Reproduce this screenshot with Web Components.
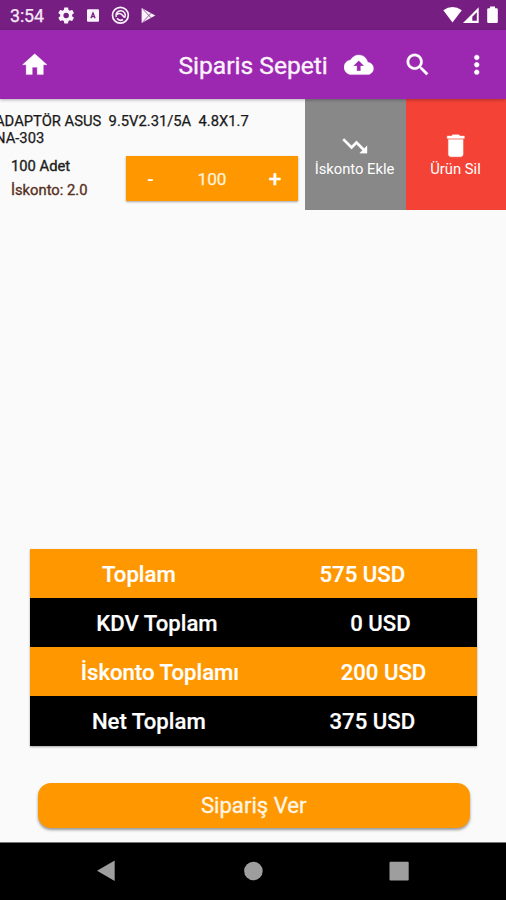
<!DOCTYPE html>
<html lang="tr">
<head>
<meta charset="utf-8">
<title>Siparis Sepeti</title>
<style>
html,body{margin:0;padding:0}
body{width:506px;height:900px;overflow:hidden;background:#fafafa;font-family:Roboto,"Liberation Sans",sans-serif}
</style>
</head>
<body>
<order-screen></order-screen>
<script>
const define = (name, html) => customElements.define(name, class extends HTMLElement {
  constructor() {
    super();
    this.attachShadow({mode: 'open'}).innerHTML = html;
  }
});

const ICONS = {
  home: 'M10 20v-6h4v6h5v-8h3L12 3 2 12h3v8z',
  cloud: 'M19.35 10.04C18.67 6.59 15.64 4 12 4 9.11 4 6.6 5.64 5.35 8.04 2.34 8.36 0 10.91 0 14c0 3.31 2.69 6 6 6h13c2.76 0 5-2.24 5-5 0-2.64-2.05-4.78-4.65-4.96zM13.600 13v4h-3.200v-4H7.500l4.500-4.500 4.500 4.500z',
  search: 'M15.5 14h-.79l-.28-.27C15.41 12.59 16 11.11 16 9.5 16 5.91 13.09 3 9.5 3S3 5.91 3 9.5 5.91 16 9.5 16c1.61 0 3.09-.59 4.23-1.57l.27.28v.79l5 4.99L20.49 19l-4.99-5zm-6 0C7.01 14 5 11.99 5 9.5S7.01 5 9.5 5 14 7.01 14 9.5 11.99 14 9.5 14z',
  more: 'M12 8c1.1 0 2-.9 2-2s-.9-2-2-2-2 .9-2 2 .9 2 2 2zm0 2c-1.1 0-2 .9-2 2s.9 2 2 2 2-.9 2-2-.9-2-2-2zm0 6c-1.1 0-2 .9-2 2s.9 2 2 2 2-.9 2-2-.9-2-2-2z',
  trend: 'M16 18l2.29-2.29-4.88-4.88-4 4L2 7.41 3.41 6l6 6 4-4 6.3 6.29L22 12v6z',
  trash: 'M6 19c0 1.1.9 2 2 2h8c1.1 0 2-.9 2-2V7H6v12zM19 4h-3.5l-1-1h-5l-1 1H5v2h14V4z'
};
customElements.define('md-icon', class extends HTMLElement {
  connectedCallback() {
    if (this.shadowRoot) return;
    this.attachShadow({mode: 'open'}).innerHTML = `<style>:host{display:block;width:29.5px;height:29.5px;flex:none}svg{display:block;width:100%;height:100%;fill:currentColor;stroke:currentColor;stroke-width:.25}</style>
      <svg viewBox="0 0 24 24"><path d="${ICONS[this.getAttribute('name')]}"/></svg>`;
  }
});

define('status-bar', `<style>
:host{display:flex;justify-content:space-between;height:30px;background:#771e82;color:#fff}
span{font-size:17.8px;line-height:32px;padding-left:10px;width:46px;box-sizing:border-box;letter-spacing:-.1px;white-space:nowrap;color:#f6e9f7;-webkit-text-stroke:.25px}
.left{display:flex}svg{display:block}
</style>
<div class="left"><span>3:54</span>
<svg width="114" height="30" viewBox="46 0 114 30" fill="#fbf3fb">
 <g transform="translate(56.2 5.500) scale(.83)"><path d="M19.14 12.94c.04-.3.06-.61.06-.94s-.02-.64-.07-.94l2.03-1.58c.18-.14.23-.41.12-.61l-1.92-3.32c-.12-.22-.37-.29-.59-.22l-2.39.96c-.5-.38-1.03-.7-1.62-.94l-.36-2.54c-.04-.24-.24-.41-.48-.41h-3.84c-.24 0-.43.17-.47.41l-.36 2.54c-.59.24-1.13.57-1.62.94l-2.39-.96c-.22-.08-.47 0-.59.22L2.74 8.87c-.12.21-.08.47.12.61l2.03 1.58c-.05.3-.09.63-.09.94s.02.64.07.94l-2.03 1.58c-.18.14-.23.41-.12.61l1.92 3.32c.12.22.37.29.59.22l2.39-.96c.5.38 1.03.7 1.62.94l.36 2.54c.05.24.24.41.48.41h3.84c.24 0 .44-.17.47-.41l.36-2.54c.59-.24 1.13-.56 1.62-.94l2.39.96c.22.08.47 0 .59-.22l1.92-3.32c.12-.22.07-.47-.12-.61l-2.01-1.58zM12 15.300A3.300 3.300 0 1 1 12 8.700a3.300 3.300 0 0 1 0 6.600z"/></g>
 <rect x="87" y="9.200" width="12" height="12.600" rx="1"/>
 <path d="M90.900 18.300l2.100-5.300 2.100 5.300M91.500 16.700h3" fill="none" stroke="#771e82" stroke-width="1.300"/>
 <circle cx="120.400" cy="15.300" r="7.900" fill="none" stroke="#fbf3fb" stroke-width="1.700"/>
 <path d="M116.200 17a4.700 4.700 0 1 1 8.600 .6M117 14.600c1.500-1.600 3.500-1.400 5 .2l2.600 2.800M117 18.300a4.600 4.600 0 0 0 6 1.200" fill="none" stroke="#fbf3fb" stroke-width="1.600"/>
 <path d="M141.600 8L155.300 15.600 141.600 23z"/>
 <path d="M143 9.300l8 8.500M143 21.700l8-8.500" stroke="#771e82" stroke-width=".7"/>
</svg></div>
<svg width="70" height="30" viewBox="436 0 70 30" fill="#fff">
 <path d="M443.300 10.300Q452.500 3.600 461.800 10.300L452.500 22.500z"/>
 <path d="M463 23L478.700 7.300V23z"/><path d="M472.300 16.700L476.800 12.200V20.800H472.300z" fill="#771e82"/>
 <path d="M490 6.500h5v1.800h1.600q1.200 0 1.200 1.200v12.300q0 1.200-1.200 1.200h-8.200q-1.200 0-1.200-1.200V9.500q0-1.200 1.200-1.200H490z"/>
</svg>`);

define('app-bar', `<style>
:host{display:flex;align-items:center;height:68.500px;box-sizing:border-box;background:#9c27b0;color:#fff;padding:0 14.800px 0 20px;box-shadow:0 1px 3px rgba(0,0,0,.3);position:relative}
h1{flex:1;margin:0;text-align:right;font-size:24.600px;font-weight:400;line-height:30px;letter-spacing:0;padding:3px 16.500px 0 0;color:#fbf3fb;-webkit-text-stroke:.35px;white-space:nowrap}
.a{display:flex;gap:29.200px}
</style><md-icon name="home"></md-icon><h1><slot></slot></h1>
<div class="a"><md-icon name="cloud"></md-icon><md-icon name="search"></md-icon><md-icon name="more"></md-icon></div>`);

define('slide-action', `<style>
:host{display:flex;flex-direction:column;align-items:center;width:101px;flex:none;box-sizing:border-box;padding-top:32px;color:#fff}
span{font-size:14.800px;line-height:18px;white-space:nowrap;letter-spacing:-.02px;margin-left:-1px}
</style><slot name="icon"></slot><span><slot></slot></span>`);

define('qty-stepper', `<style>
:host{display:grid;grid-template-columns:49px 74px 49px;align-items:center;justify-items:center;width:172px;height:44.500px;background:#ff9800;color:#fff3df;box-shadow:0 1px 2px rgba(0,0,0,.35);font-size:17.200px;line-height:24px}
span{padding-top:0;-webkit-text-stroke:.25px}
b{font-size:19px;font-weight:500;color:#fff;padding-top:2px}b:last-child{font-size:22px;font-weight:400;-webkit-text-stroke:.6px;padding-left:3px}
</style><b>-</b><span><slot></slot></span><b>+</b>`);

define('cart-item', `<style>
:host{display:flex;height:111px;overflow:hidden}
.body{width:304.500px;flex:none;box-sizing:border-box;padding:14.500px 6.500px 0 0}
p{margin:0 0 0 -5px;font-size:14.750px;line-height:17.300px;white-space:pre;color:#191919;-webkit-text-stroke:.25px}
.row{display:flex;justify-content:space-between;padding:8.700px 0 0 11px}
.info{font-size:14.760px;line-height:24.200px;color:#222;white-space:nowrap;margin-top:-2px;-webkit-text-stroke:.35px}
.disc{color:#57301f}
slide-action:first-of-type{background:#888}
slide-action:last-of-type{background:#f44336}
</style>
<div class="body"><p>ADAPTÖR ASUS  9.5V2.31/5A  4.8X1.7
NA-303</p>
<div class="row"><div class="info"><div>100 Adet</div><div class="disc">İskonto: 2.0</div></div><qty-stepper>100</qty-stepper></div></div>
<slide-action><md-icon slot="icon" name="trend"></md-icon>İskonto Ekle</slide-action>
<slide-action><md-icon slot="icon" name="trash"></md-icon>Ürün Sil</slide-action>`);

define('total-row', `<style>
:host{display:flex;justify-content:space-around;align-items:center;height:49.200px;color:#fff;font-size:22.150px;font-weight:500;white-space:nowrap;padding-top:1px;box-sizing:border-box;-webkit-text-stroke:.2px}
:host([tone=orange]){background:#ff9800}:host([tone=black]){background:#000}
</style><span><slot></slot></span><span><slot name="value"></slot></span>`);

define('order-button', `<style>
:host{display:block}
button{display:block;width:100%;height:44.500px;border:0;border-radius:13px;background:#ff9800;color:#fff6e8;font:400 22.150px/44px Roboto,"Liberation Sans",sans-serif;padding:0;box-shadow:0 2px 3px rgba(0,0,0,.4);-webkit-text-stroke:.3px}
</style><button><slot></slot></button>`);

define('nav-bar', `<style>
:host{display:block;height:58.500px;background:#000;border-top:1px solid #777;box-sizing:border-box}svg{display:block}
</style><svg width="506" height="57" viewBox="0 843 506 57" fill="#9e9e9e"><path d="M97 870.800L114.700 860.500V881z"/><circle cx="253.400" cy="871" r="9.300"/><rect x="389.500" y="861.800" width="19.200" height="18.800" rx="1"/></svg>`);

define('order-screen', `<style>
:host{display:flex;flex-direction:column;height:900px;width:506px;overflow:hidden;background:#fafafa}
.totals{margin:auto 29px 37.500px 30px;box-shadow:0 1px 2px rgba(0,0,0,.35)}
order-button{margin:0 36px 14px 37.500px}
</style>
<status-bar></status-bar><app-bar>Siparis Sepeti</app-bar><cart-item></cart-item>
<div class="totals">
<total-row tone="orange">Toplam<span slot="value">575 USD</span></total-row>
<total-row tone="black">KDV Toplam<span slot="value">0 USD</span></total-row>
<total-row tone="orange">İskonto Toplamı<span slot="value">200 USD</span></total-row>
<total-row tone="black">Net Toplam<span slot="value">375 USD</span></total-row>
</div>
<order-button>Sipariş Ver</order-button><nav-bar></nav-bar>`);
</script>
</body>
</html>
